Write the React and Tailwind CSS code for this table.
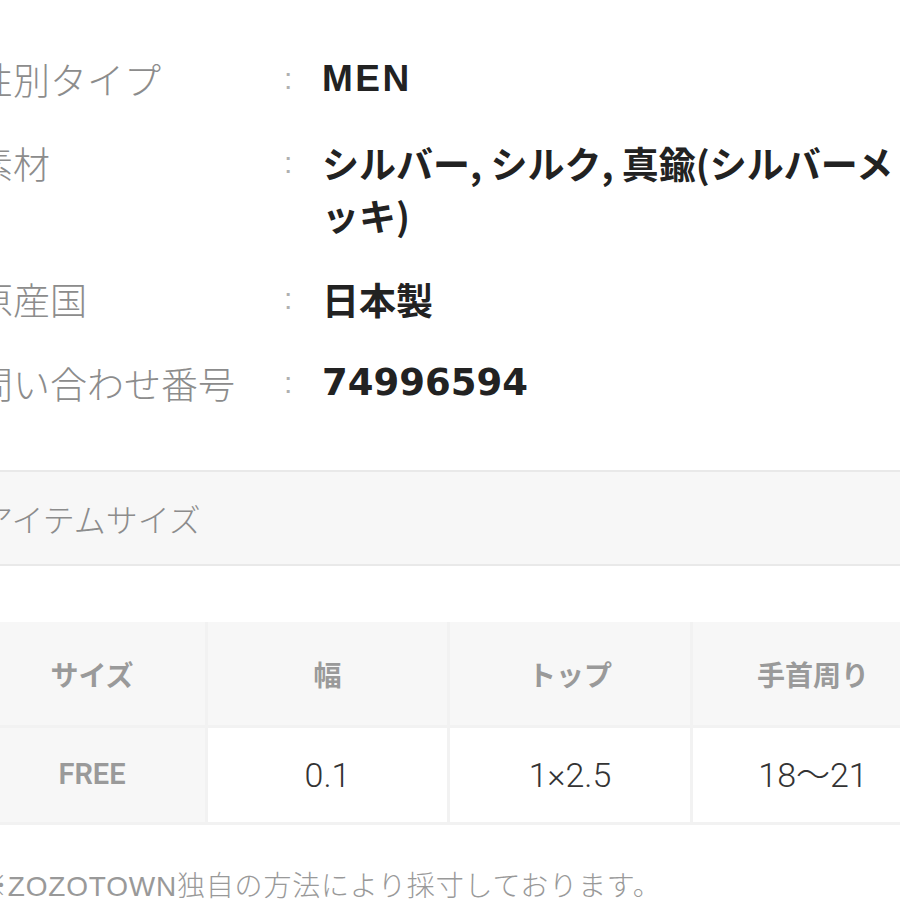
const specs = [
  { label: "性別タイプ", value: "MEN", latin: true },
  { label: "素材", value: "シルバー, シルク, 真鍮(シルバーメッキ)" },
  { label: "原産国", value: "日本製" },
  { label: "問い合わせ番号", value: "74996594", digits: true },
];

const sizeHead = ["サイズ", "幅", "トップ", "手首周り"];
const sizeRow = ["FREE", "0.1", "1×2.5", "18〜21"];

const jp = "font-['Noto_Sans_CJK_JP',sans-serif]";

const SpecRow = ({ spec }) => (
  <div className="flex items-start leading-[52px]">
    <div className={`w-[308px] shrink-0 text-[37px] font-light text-[#8c8c8c] ${jp}`}>
      {spec.label}
    </div>
    <div className="w-[38px] shrink-0 text-[30px] text-[#b0b0b0] font-['Liberation_Sans',sans-serif]">
      :
    </div>
    <div
      className={`flex-1 text-[37px] font-bold text-[#222] ${
        spec.digits
          ? "font-['DejaVu_Sans','Noto_Sans_CJK_JP',sans-serif]"
          : spec.latin
          ? "font-['Liberation_Sans','Noto_Sans_CJK_JP',sans-serif] tracking-[2.5px]"
          : jp
      }`}>
      {spec.value}
    </div>
  </div>
);

export default function App() {
  return (
    <div className="w-[900px] h-[900px] overflow-hidden bg-white">
      <div className="-ml-[24px] w-[960px]">
        <div className="w-[924px] pt-[53px] flex flex-col gap-[32px]">
          {specs.map((s) => (
            <SpecRow key={s.label} spec={s} />
          ))}
        </div>

        <div className="mt-[61px] h-[96px] flex items-center pl-[5px] bg-[#f7f7f7] border-y-2 border-[#e9e9e9]">
          <span className={`text-[32px] font-light text-[#8c8c8c] ${jp}`}>
            アイテムサイズ
          </span>
        </div>

        <div className="mt-[56px] ml-[3px] grid grid-cols-[226px_239px_240px_240px] gap-[3px] pb-[3px] bg-[#f2f2f2]">
          {sizeHead.map((h) => (
            <div
              key={h}
              className={`h-[103px] flex items-center justify-center bg-[#f7f7f7] text-[28px] font-bold text-[#9a9a9a] ${jp}`}>
              {h}
            </div>
          ))}
          {sizeRow.map((v, i) => (
            <div
              key={v}
              className={`h-[94px] flex items-center justify-center ${
                i === 0
                  ? "bg-[#f7f7f7] text-[29px] font-semibold text-[#9a9a9a] font-['Roboto',sans-serif]"
                  : "bg-white text-[34px] font-light text-[#333] font-['Roboto','Noto_Sans_CJK_JP',sans-serif]"
              }`}>
              {v}
            </div>
          ))}
        </div>

        <p className="mt-[42px] pl-[3px] leading-[40px] text-[28px] tracking-[0.8px] font-light text-[#999] font-['Liberation_Sans','Noto_Sans_CJK_JP',sans-serif] whitespace-nowrap">
          ※ZOZOTOWN独自の方法により採寸しております。
        </p>
      </div>
    </div>
  );
}
